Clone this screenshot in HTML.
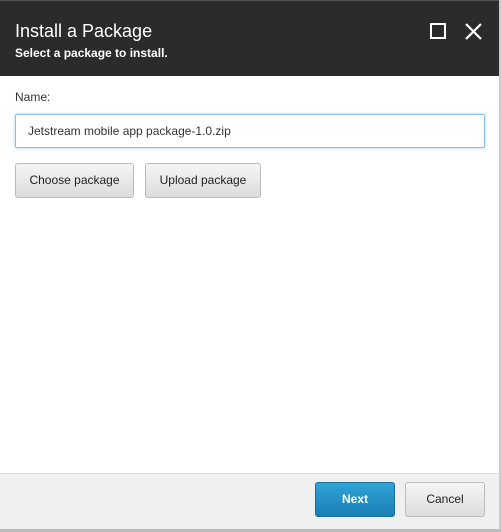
<!DOCTYPE html>
<html><head><style>
body{margin:0;width:501px;height:532px;background:#fff;font-family:"Liberation Sans",Arial,sans-serif;position:relative;overflow:hidden}
.hdr{position:absolute;left:0;top:0;width:499px;height:75px;background:#2b2b2b;border-top:1px solid #555}
.t{position:absolute;left:15px;top:20px;color:#fff;font-size:18px}
.s{position:absolute;left:15px;top:45px;color:#fff;font-size:12px;font-weight:bold}
.rb{position:absolute;right:0;top:0;width:2px;height:532px;background:#ccc}
.lbl{position:absolute;left:15px;top:90px;font-size:12px;color:#333}
.inp{position:absolute;left:15px;top:114px;width:467px;height:32px;border:1px solid #8fbde0;box-shadow:0 0 3px #a9d1f0;border-radius:2px;font-size:12px;color:#333;line-height:32px;padding-left:12px;box-sizing:border-box;width:470px;height:34px}
.b{position:absolute;height:35px;box-sizing:border-box;border:1px solid #bbb;border-radius:3px;background:linear-gradient(#f5f5f5,#dcdcdc);font-size:12px;color:#222;text-align:center;line-height:33px}
.ft{position:absolute;left:0;top:473px;width:499px;height:56px;background:#f0f0f0;border-top:1px solid #ddd}
.bot{position:absolute;left:0;top:529px;width:501px;height:3px;background:#bbb}
</style></head><body>
<div class="hdr"><div class="t">Install a Package</div><div class="s">Select a package to install.</div>
<svg style="position:absolute;left:430px;top:22px" width="18" height="18"><rect x="1" y="1" width="14" height="14" fill="none" stroke="#fff" stroke-width="2"/></svg>
<svg style="position:absolute;left:464px;top:22px" width="20" height="18"><path d="M2 1L17 16M17 1L2 16" stroke="#fff" stroke-width="2.2"/></svg>
</div>
<div class="rb"></div>
<div class="lbl">Name:</div>
<div class="inp">Jetstream mobile app package-1.0.zip</div>
<div class="b" style="left:15px;top:163px;width:119px">Choose package</div>
<div class="b" style="left:145px;top:163px;width:116px">Upload package</div>
<div class="ft"></div>
<div class="b" style="left:315px;top:482px;width:80px;background:linear-gradient(#2fa3d6,#1a7fb3);border-color:#1b6f9c;color:#fff;font-weight:bold">Next</div>
<div class="b" style="left:405px;top:482px;width:80px">Cancel</div>
<div class="bot"></div>
</body></html>
